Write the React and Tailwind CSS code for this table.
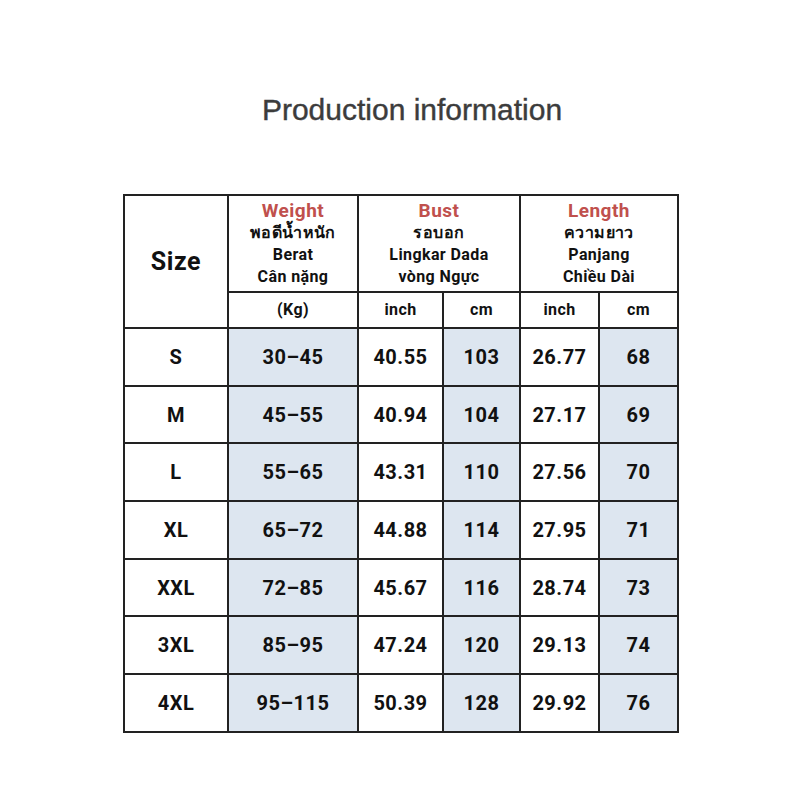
const ROWS = [
  ['S', '30–45', '40.55', '103', '26.77', '68'],
  ['M', '45–55', '40.94', '104', '27.17', '69'],
  ['L', '55–65', '43.31', '110', '27.56', '70'],
  ['XL', '65–72', '44.88', '114', '27.95', '71'],
  ['XXL', '72–85', '45.67', '116', '28.74', '73'],
  ['3XL', '85–95', '47.24', '120', '29.13', '74'],
  ['4XL', '95–115', '50.39', '128', '29.92', '76'],
]

const font = { fontFamily: 'Roboto, "Noto Sans", "DejaVu Sans", sans-serif' }

function HeadCell({ title, lines, colSpan }) {
  return (
    <th colSpan={colSpan} className="border-2 border-[#222] align-middle p-0 font-bold">
      <div className="flex flex-col items-center leading-[22px] pt-[1px]">
        <span className="text-[19px] text-[#c0504d] tracking-wide">{title}</span>
        {lines.map((l) => (
          <span key={l} className="text-[16px] text-[#111] tracking-wide">{l}</span>
        ))}
      </div>
    </th>
  )
}

export default function App() {
  return (
    <div className="w-[800px] h-[800px] bg-white flex flex-col items-center" style={font}>
      <h1
        className="mt-[87px] ml-[24px] text-[30px] text-[#3c3c3c] [-webkit-text-stroke:0.4px_#3c3c3c]"
        style={{ fontFamily: '"Liberation Sans", Arial, sans-serif' }}
      >
        Production information
      </h1>
      <table className="mt-[62px] ml-[2px] border-collapse border-2 border-[#222] text-[#111] table-fixed w-[554px]">
        <colgroup>
          <col className="w-[104px]" />
          <col className="w-[130px]" />
          <col className="w-[85px]" />
          <col className="w-[77px]" />
          <col className="w-[79px]" />
          <col className="w-[79px]" />
        </colgroup>
        <thead>
          <tr className="h-[97px]">
            <th rowSpan={2} className="border-2 border-[#222] text-[25px] font-bold tracking-wide">
              Size
            </th>
            <HeadCell title="Weight" lines={['พอดีน้ำหนัก', 'Berat', 'Cân nặng']} />
            <HeadCell colSpan={2} title="Bust" lines={['รอบอก', 'Lingkar Dada', 'vòng Ngực']} />
            <HeadCell colSpan={2} title="Length" lines={['ความยาว', 'Panjang', 'Chiều Dài']} />
          </tr>
          <tr className="h-[36px] text-[16px] font-bold">
            <th className="border-2 border-[#222] tracking-wide">(Kg)</th>
            <th className="border-2 border-[#222] tracking-wide">inch</th>
            <th className="border-2 border-[#222] tracking-wide">cm</th>
            <th className="border-2 border-[#222] tracking-wide">inch</th>
            <th className="border-2 border-[#222] tracking-wide">cm</th>
          </tr>
        </thead>
        <tbody>
          {ROWS.map((r) => (
            <tr key={r[0]} className="h-[57.7px] text-[20px] font-bold tracking-wide text-center">
              <td className="border-2 border-[#222]">{r[0]}</td>
              <td className="border-2 border-[#222] bg-[#dde6f0]">{r[1]}</td>
              <td className="border-2 border-[#222]">{r[2]}</td>
              <td className="border-2 border-[#222] bg-[#dde6f0]">{r[3]}</td>
              <td className="border-2 border-[#222]">{r[4]}</td>
              <td className="border-2 border-[#222] bg-[#dde6f0]">{r[5]}</td>
            </tr>
          ))}
        </tbody>
      </table>
    </div>
  )
}
